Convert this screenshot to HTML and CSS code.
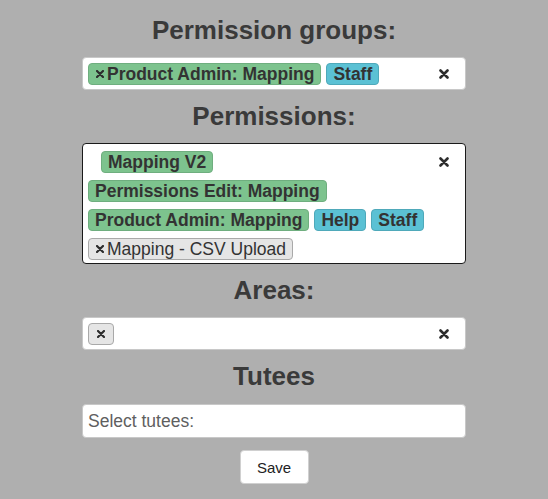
FILE: index.html
```html
<!DOCTYPE html>
<html>
<head>
<meta charset="utf-8">
<link rel="stylesheet" href="styles.css">
</head>
<body>
<div class="page">
  <h2 class="title">Permission groups:</h2>
  <div class="select">
    <div class="values">
      <span class="chip green"><svg class="rm" viewBox="0 0 8 8"><path d="M1 1L7 7M7 1L1 7"/></svg>Product Admin: Mapping</span>
      <span class="chip blue">Staff</span>
    </div>
    <span class="clear"><svg viewBox="0 0 10 10"><path d="M1.5 1.5L8.5 8.5M8.5 1.5L1.5 8.5"/></svg></span>
  </div>

  <h2 class="title">Permissions:</h2>
  <div class="select focused">
    <div class="values">
      <span class="chip green indent">Mapping V2</span>
      <span class="chip green">Permissions Edit: Mapping</span>
      <span class="chip green">Product Admin: Mapping</span>
      <span class="chip blue">Help</span>
      <span class="chip blue">Staff</span>
      <span class="chip grey"><svg class="rm" viewBox="0 0 8 8"><path d="M1 1L7 7M7 1L1 7"/></svg>Mapping - CSV Upload</span>
    </div>
    <span class="clear"><svg viewBox="0 0 10 10"><path d="M1.5 1.5L8.5 8.5M8.5 1.5L1.5 8.5"/></svg></span>
  </div>

  <h2 class="title">Areas:</h2>
  <div class="select">
    <div class="values">
      <span class="chip grey only"><svg class="rm" viewBox="0 0 8 8"><path d="M1 1L7 7M7 1L1 7"/></svg></span>
    </div>
    <span class="clear"><svg viewBox="0 0 10 10"><path d="M1.5 1.5L8.5 8.5M8.5 1.5L1.5 8.5"/></svg></span>
  </div>

  <h2 class="title">Tutees</h2>
  <input class="text-input" type="text" placeholder="Select tutees:">

  <div class="actions">
    <button class="btn">Save</button>
  </div>
</div>
</body>
</html>
```

FILE: styles.css
```css
html, body {
  margin: 0;
  padding: 0;
  background: #afafaf;
}
body {
  font-family: "Liberation Sans", Arial, sans-serif;
  color: #333;
}
.page {
  width: 384px;
  margin: 0 auto;
  padding-top: 5px;
  display: flex;
  flex-direction: column;
}
.title {
  margin: 11px 0 12px;
  font-size: 26px;
  line-height: 30px;
  font-weight: bold;
  text-align: center;
  color: #3a3a3a;
}
.page > .title:first-child {
  margin-top: 10px;
}
.select {
  display: flex;
  align-items: flex-start;
  background: #fff;
  border: 1px solid #c8c8c8;
  border-radius: 4px;
  padding: 5px 6px 4px 5px;
}
.select.focused {
  border-color: #1a1a1a;
  padding-top: 7px;
  padding-bottom: 3px;
}
.values {
  flex: 1;
  display: flex;
  flex-wrap: wrap;
  column-gap: 5px;
  row-gap: 7px;
}
.chip {
  display: inline-flex;
  align-items: center;
  height: 22px;
  box-sizing: border-box;
  padding: 0 6px;
  border: 1px solid;
  border-radius: 4px;
  font-size: 17.5px;
  line-height: 20px;
  font-weight: bold;
  color: #333;
  white-space: nowrap;
}
.chip.green {
  background: #7dc38e;
  border-color: #6fae7f;
}
.chip.blue {
  background: #5bc1d4;
  border-color: #4fa9ba;
}
.chip.grey {
  background: #e5e5e5;
  border-color: #a9a9a9;
  font-weight: normal;
  color: #333;
  padding-left: 6px;
}
.chip.only {
  width: 26px;
  justify-content: center;
  padding: 0;
}
.chip.indent {
  margin-left: 13px;
}
.rm {
  width: 8px;
  height: 8px;
  margin-left: 1px;
  margin-right: 3px;
  flex: none;
}
.chip.only .rm {
  margin: 0;
}
.rm path {
  stroke: #2d2d2d;
  stroke-width: 2.2;
  stroke-linecap: round;
  fill: none;
}
.clear {
  width: 30px;
  height: 22px;
  display: flex;
  align-items: center;
  justify-content: center;
  flex: none;
}
.clear svg {
  width: 10px;
  height: 10px;
}
.clear path {
  stroke: #2d2d2d;
  stroke-width: 2.6;
  stroke-linecap: round;
  fill: none;
}
.text-input {
  display: block;
  box-sizing: border-box;
  width: 384px;
  height: 34px;
  margin: 1px 0 0;
  padding: 0 5px;
  background: #fff;
  border: 1px solid #c8c8c8;
  border-radius: 4px;
  font-family: "Liberation Sans", Arial, sans-serif;
  font-size: 17.5px;
  color: #333;
  outline: none;
}
.text-input::placeholder {
  color: #5f5f5f;
}
.actions {
  display: flex;
  justify-content: center;
  margin-top: 12px;
}
.btn {
  width: 69px;
  height: 34px;
  background: #fff;
  border: 1px solid #d0d0d0;
  border-radius: 4px;
  font-family: "Liberation Sans", Arial, sans-serif;
  font-size: 15px;
  color: #222;
  padding: 0;
}
```
